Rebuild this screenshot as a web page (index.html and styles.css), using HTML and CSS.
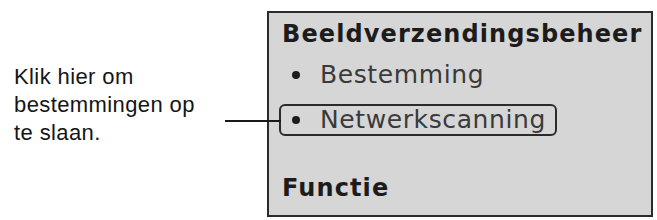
FILE: index.html
```html
<!DOCTYPE html>
<html>
<head>
<meta charset="utf-8">
<link rel="stylesheet" href="styles.css">
</head>
<body>
<div class="page">
  <p class="note">Klik hier om<br>bestemmingen op<br>te slaan.</p>
  <div class="panel">
    <h2 class="title">Beeldverzendingsbeheer</h2>
    <ul class="menu">
      <li class="item"><span class="dot"></span>Bestemming</li>
      <li class="item item-marked"><span class="dot"></span>Netwerkscanning</li>
    </ul>
    <h2 class="title title-next">Functie</h2>
  </div>
</div>
</body>
</html>
```
FILE: styles.css
```css
html, body {
  margin: 0;
  padding: 0;
  background: #ffffff;
}
body {
  width: 657px;
  height: 220px;
  overflow: hidden;
}
.page {
  display: flex;
  padding: 11px 0 0 14px;
}
.note {
  margin: 0;
  width: 253px;
  padding-top: 52px;
  font-family: "Liberation Sans", Arial, sans-serif;
  font-size: 22px;
  line-height: 28px;
  letter-spacing: 0.4px;
  color: #151515;
}
.panel {
  box-sizing: border-box;
  width: 386px;
  height: 206px;
  border: 2px solid #2b2b2b;
  background: #d6d6d6;
  padding: 6px 0 0 10px;
  font-family: "DejaVu Sans", Verdana, sans-serif;
}
.title {
  margin: 0 0 0 3px;
  font-size: 24px;
  line-height: 30px;
  letter-spacing: 1.1px;
  font-weight: bold;
  color: #1c1c1c;
}
.title-next {
  margin-top: 37px;
}
.menu {
  list-style: none;
  margin: 10px 0 0;
  padding: 0;
}
.item {
  position: relative;
  display: flex;
  align-items: center;
  width: max-content;
  height: 32px;
  box-sizing: border-box;
  padding: 0 9px 0 11px;
  border: 2px solid transparent;
  border-radius: 6px;
  margin-bottom: 13px;
  font-size: 25px;
  line-height: 28px;
  letter-spacing: 0.6px;
  color: #3a3a3a;
}
.item:last-child {
  margin-bottom: 0;
}
.dot {
  flex: none;
  width: 8px;
  height: 8px;
  border-radius: 50%;
  background: #1c1c1c;
  margin-right: 20px;
}
.item-marked {
  border-color: #2b2b2b;
}
.item-marked::before {
  content: "";
  position: absolute;
  right: 100%;
  top: 14px;
  width: 56px;
  height: 2px;
  background: #1a1a1a;
}
```
